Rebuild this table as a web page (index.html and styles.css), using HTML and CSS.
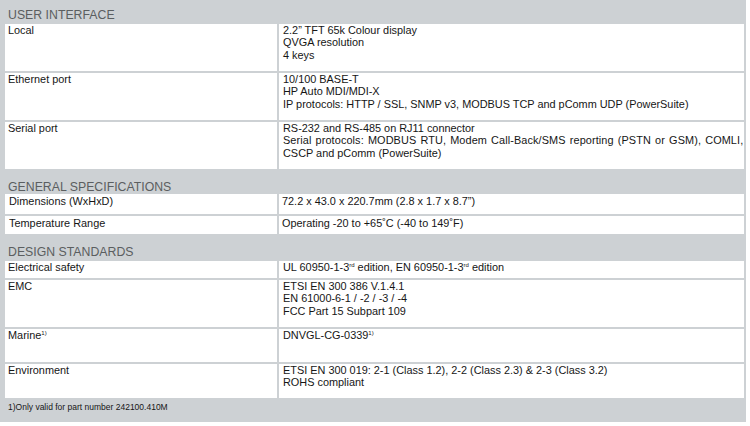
FILE: index.html
```html
<!DOCTYPE html>
<html>
<head>
<meta charset="utf-8">
<link rel="stylesheet" href="styles.css">
</head>
<body>
<div class="spec">
  <div class="sec">USER INTERFACE</div>
  <div class="cell r47">Local</div>
  <div class="cell r47">2.2” TFT 65k Colour display<br>QVGA resolution<br>4 keys</div>
  <div class="cell r47">Ethernet port</div>
  <div class="cell r47">10/100 BASE-T<br>HP Auto MDI/MDI-X<br>IP protocols: HTTP / SSL, SNMP v3, MODBUS TCP and pComm UDP (PowerSuite)</div>
  <div class="cell r47">Serial port</div>
  <div class="cell r47">RS-232 and RS-485 on RJ11 connector<br><span class="wide">Serial protocols: MODBUS RTU, Modem Call-Back/SMS reporting (PSTN or GSM), COMLI,</span><br>CSCP and pComm (PowerSuite)</div>

  <div class="sec s2">GENERAL SPECIFICATIONS</div>
  <div class="cell r20">Dimensions (WxHxD)</div>
  <div class="cell r20">72.2 x 43.0 x 220.7mm (2.8 x 1.7 x 8.7”)</div>
  <div class="cell r18">Temperature Range</div>
  <div class="cell r18">Operating -20 to +65˚C (-40 to 149˚F)</div>

  <div class="sec s3">DESIGN STANDARDS</div>
  <div class="cell r17">Electrical safety</div>
  <div class="cell r17">UL 60950-1-3<sup>rd</sup> edition, EN 60950-1-3<sup>rd</sup> edition</div>
  <div class="cell r47">EMC</div>
  <div class="cell r47">ETSI EN 300 386 V.1.4.1<br>EN 61000-6-1 / -2 / -3 / -4<br>FCC Part 15 Subpart 109</div>
  <div class="cell r33">Marine<sup>1)</sup></div>
  <div class="cell r33">DNVGL-CG-0339<sup>1)</sup></div>
  <div class="cell r34">Environment</div>
  <div class="cell r34">ETSI EN 300 019: 2-1 (Class 1.2), 2-2 (Class 2.3) &amp; 2-3 (Class 3.2)<br>ROHS compliant</div>

  <div class="note">1)Only valid for part number 242100.410M</div>
</div>
</body>
</html>
```
FILE: styles.css
```css
html, body {
  margin: 0;
  padding: 0;
  background: #ffffff;
}
body {
  font-family: "Liberation Sans", Arial, sans-serif;
}
.spec {
  width: 746px;
  height: 422px;
  box-sizing: border-box;
  background: #cdd1d4;
  padding: 0 2px 0 5px;
  display: grid;
  grid-template-columns: 272px 1fr;
  grid-auto-rows: min-content;
  column-gap: 2px;
  row-gap: 2px;
  align-content: start;
}
.sec {
  grid-column: 1 / -1;
  height: 22px;
  box-sizing: border-box;
  padding: 8px 0 0 3px;
  font-size: 12.3px;
  line-height: 14px;
  color: #5b5e60;
}
.sec.s2 { height: 21px; padding-top: 9px; }
.sec.s3 { height: 23px; padding-top: 9px; }
.cell {
  background: #ffffff;
  box-sizing: border-box;
  padding: 0 0 0 3px;
  font-size: 10.9px;
  line-height: 12.4px;
  color: #161616;
}
.cell:nth-child(odd) { padding-left: 4px; }
.wide { letter-spacing: 0.1px; word-spacing: 1px; }
.r47 { height: 47px; }
.r20 { height: 20px; padding-top: 1px; }
.r18 { height: 18px; padding-top: 1px; }
.r17 { height: 17px; }
.r33 { height: 33px; }
.r34 { height: 34px; }
sup {
  font-size: 6px;
  line-height: 0;
  vertical-align: 4px;
}
.note {
  grid-column: 1 / -1;
  height: 23px;
  box-sizing: border-box;
  padding: 2px 0 0 3px;
  font-size: 8.5px;
  line-height: 11px;
  color: #161616;
}
```
